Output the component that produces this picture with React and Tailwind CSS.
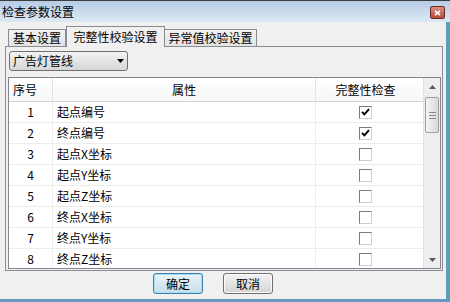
import React from 'react';

const rows = [
  { id: 1, name: '起点编号', checked: true },
  { id: 2, name: '终点编号', checked: true },
  { id: 3, name: '起点X坐标', checked: false },
  { id: 4, name: '起点Y坐标', checked: false },
  { id: 5, name: '起点Z坐标', checked: false },
  { id: 6, name: '终点X坐标', checked: false },
  { id: 7, name: '终点Y坐标', checked: false },
  { id: 8, name: '终点Z坐标', checked: false },
];

function CheckBox({ checked }) {
  return (
    <span className="w-[13px] h-[13px] bg-white border border-t-[#7c7c7c] border-l-[#7c7c7c] border-r-[#cfcfcf] border-b-[#cfcfcf] flex items-center justify-center">
      {checked && (
        <svg width="9" height="8" viewBox="0 0 9 8">
          <path d="M1 3.8 L3.4 6.3 L8 1.2" stroke="#000" strokeWidth="1.9" fill="none" />
        </svg>
      )}
    </span>
  );
}

function ScrollBar() {
  return (
    <div className="w-[17px] flex flex-col bg-[#eeeeee] border-l border-[#e2e2e2]">
      <div className="h-[17px] flex items-center justify-center">
        <svg width="7" height="4" viewBox="0 0 7 4">
          <path d="M0 4 L3.5 0 L7 4 Z" fill="#5a5a5a" />
        </svg>
      </div>
      <div className="h-[2px]" />
      {/* thumb */}
      <div className="mx-px h-[36px] rounded-[2px] border border-[#9e9e9e] bg-gradient-to-r from-[#f4f4f4] to-[#dadada] flex flex-col items-center justify-center gap-[2px]">
        <span className="w-[7px] h-px bg-[#8a8a8a]" />
        <span className="w-[7px] h-px bg-[#8a8a8a]" />
        <span className="w-[7px] h-px bg-[#8a8a8a]" />
      </div>
      <div className="flex-1" />
      <div className="h-[17px] flex items-center justify-center">
        <svg width="7" height="4" viewBox="0 0 7 4">
          <path d="M0 0 L3.5 4 L7 0 Z" fill="#5a5a5a" />
        </svg>
      </div>
    </div>
  );
}

export default function App() {
  return (
    <div className="w-[450px] h-[302px] flex flex-col overflow-hidden bg-[#f0f0f0] text-[12px] text-black font-['Noto_Sans_CJK_SC',sans-serif] select-none">
      {/* Title bar */}
      <div className="h-[22px] shrink-0 flex items-center pl-[2px] border-t border-[#3d3d3d] bg-gradient-to-b from-[#b6cde6] to-[#dde8f3]">
        <span className="leading-none">检查参数设置</span>
        <div className="ml-auto mr-[5px] mt-[2px] w-[15px] h-[13px] rounded-[2px] border border-[#6b2b23] bg-gradient-to-b from-[#dc8f82] to-[#b5473a] flex items-center justify-center">
          <svg width="7" height="6" viewBox="0 0 7 6">
            <path d="M1 0.8 L6 5.2 M6 0.8 L1 5.2" stroke="#fff" strokeWidth="1.7" />
          </svg>
        </div>
      </div>

      {/* Body */}
      <div className="flex-1 flex flex-col border-r-[4px] border-r-[#5e9fb5] border-b-[3px] border-b-[#6497c2]">
        {/* Tabs */}
        <div className="h-[24px] shrink-0 flex items-end pl-[8px]">
          <div className="w-[58px] h-[17px] border border-b-0 border-[#898c95] bg-gradient-to-b from-[#f2f2f2] to-[#e3e3e3] flex items-center justify-center leading-none">
            基本设置
          </div>
          <div className="relative z-10 w-[99px] h-[21px] -mb-px border border-b-0 border-[#898c95] bg-[#f0f0f0] flex items-center justify-center leading-none">
            完整性校验设置
          </div>
          <div className="w-[92px] h-[17px] border border-b-0 border-l-0 border-[#898c95] bg-gradient-to-b from-[#f2f2f2] to-[#e3e3e3] flex items-center justify-center leading-none">
            异常值校验设置
          </div>
        </div>

        {/* Tab panel */}
        <div className="ml-[5px] w-[438px] h-[225px] shrink-0 border border-[#898c95] flex flex-col">
          {/* Combo */}
          <div className="ml-[3px] mt-[4px] w-[119px] h-[20px] rounded-[3px] border border-[#707070] bg-gradient-to-b from-[#f3f3f3] to-[#d6d6d6] flex items-center justify-between pl-[3px] pr-[3px]">
            <span className="leading-none">广告灯管线</span>
            <svg width="7" height="4" viewBox="0 0 7 4">
              <path d="M0 0 L3.5 4 L7 0 Z" fill="#000" />
            </svg>
          </div>

          {/* List */}
          <div className="ml-[2px] mt-[6px] w-[433px] h-[192px] border border-[#828790] bg-white flex">
            <div className="flex-1 flex flex-col overflow-hidden">
              <div className="h-[24px] shrink-0 flex border-b border-[#d5d5d5] bg-gradient-to-b from-white to-[#f6f7f9]">
                <div className="w-[44px] border-r border-[#e3e4e6] flex items-center pl-[4px] leading-none">序号</div>
                <div className="w-[263px] border-r border-[#e3e4e6] flex items-center justify-center leading-none">属性</div>
                <div className="w-[99px] flex items-center justify-center leading-none">完整性检查</div>
                <div className="flex-1" />
              </div>
              {rows.map((r) => (
                <div key={r.id} className="h-[21px] shrink-0 flex border-b border-[#ececec]">
                  <div className="w-[44px] border-r border-[#ececec] flex items-center justify-center leading-none">{r.id}</div>
                  <div className="w-[263px] border-r border-[#ececec] flex items-center pl-[4px] leading-none">{r.name}</div>
                  <div className="w-[99px] flex items-center justify-center">
                    <CheckBox checked={r.checked} />
                  </div>
                  <div className="flex-1" />
                </div>
              ))}
            </div>
            <ScrollBar />
          </div>
        </div>

        {/* Buttons */}
        <div className="flex mt-[2px] pl-[153px] gap-[20px]">
          <button className="w-[50px] h-[21px] rounded-[3px] border border-[#3c7fb1] bg-gradient-to-b from-[#eaf4fa] to-[#c6deec] shadow-[inset_0_0_0_1px_#a6dcf6] flex items-center justify-center leading-none">
            确定
          </button>
          <button className="w-[50px] h-[21px] rounded-[3px] border border-[#707070] bg-gradient-to-b from-[#f3f3f3] to-[#d3d3d3] shadow-[inset_0_0_0_1px_#fbfbfb] flex items-center justify-center leading-none">
            取消
          </button>
        </div>
      </div>
    </div>
  );
}
